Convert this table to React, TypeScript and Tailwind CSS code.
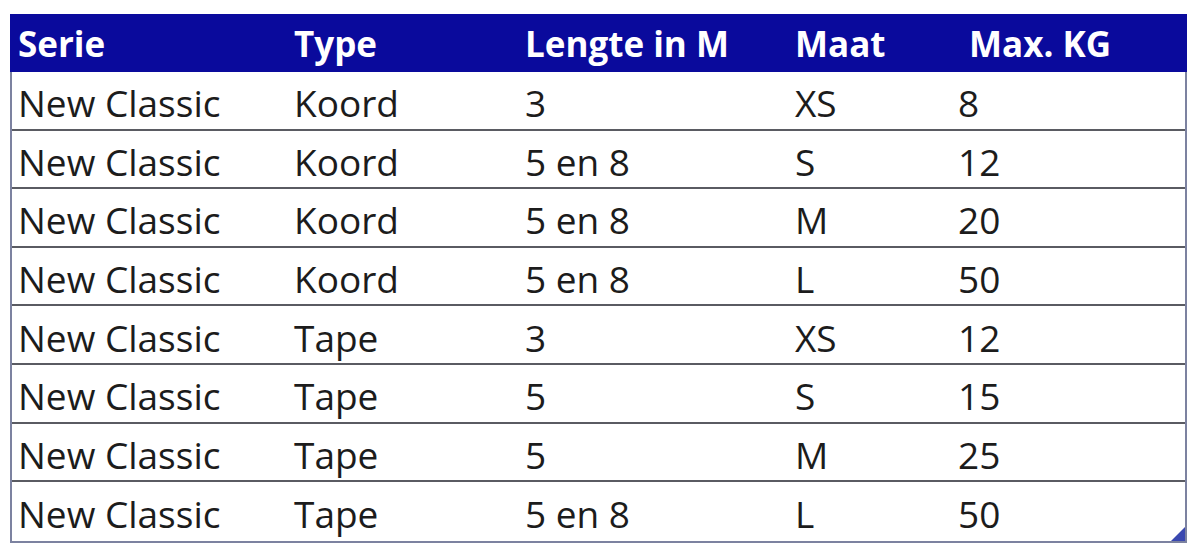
const rows = [
  ['New Classic', 'Koord', '3', 'XS', '8'],
  ['New Classic', 'Koord', '5 en 8', 'S', '12'],
  ['New Classic', 'Koord', '5 en 8', 'M', '20'],
  ['New Classic', 'Koord', '5 en 8', 'L', '50'],
  ['New Classic', 'Tape', '3', 'XS', '12'],
  ['New Classic', 'Tape', '5', 'S', '15'],
  ['New Classic', 'Tape', '5', 'M', '25'],
  ['New Classic', 'Tape', '5 en 8', 'L', '50'],
];

const cols = 'grid grid-cols-[276px_231px_270px_163px_1fr]';

export default function App() {
  return (
    <div className="w-[1200px] h-[550px] bg-white pt-[14px] pl-[10px] font-['Open_Sans',sans-serif]">
      <div className="relative w-[1177px] border-x-2 border-b-2 border-[#7c82a0]">
        <div className={`${cols} h-[58px] items-center bg-[#0a0a9c] text-white font-bold text-[35px] -mx-[2px] px-[2px] pt-[2px]`}>
          <div className="pl-[6px]">Serie</div>
          <div className="pl-[6px]">Type</div>
          <div className="pl-[6px]">Lengte in M</div>
          <div className="pl-[6px]">Maat</div>
          <div className="pl-[17px]">Max. KG</div>
        </div>
        {rows.map((r, i) => (
          <div
            key={i}
            className={`${cols} h-[58.6px] items-center pt-[5px] text-[37px] text-[#1c1c1c] ${i < rows.length - 1 ? 'border-b-2 border-[#5a5b62]' : ''}`}
          >
            {r.map((c, j) => (
              <div key={j} className="pl-[6px] leading-none">
                {c}
              </div>
            ))}
          </div>
        ))}
        <svg className="absolute right-0 bottom-0" width="14" height="14" viewBox="0 0 14 14">
          <polygon points="14,0 14,14 0,14" fill="#3a48b0" />
        </svg>
      </div>
    </div>
  );
}
